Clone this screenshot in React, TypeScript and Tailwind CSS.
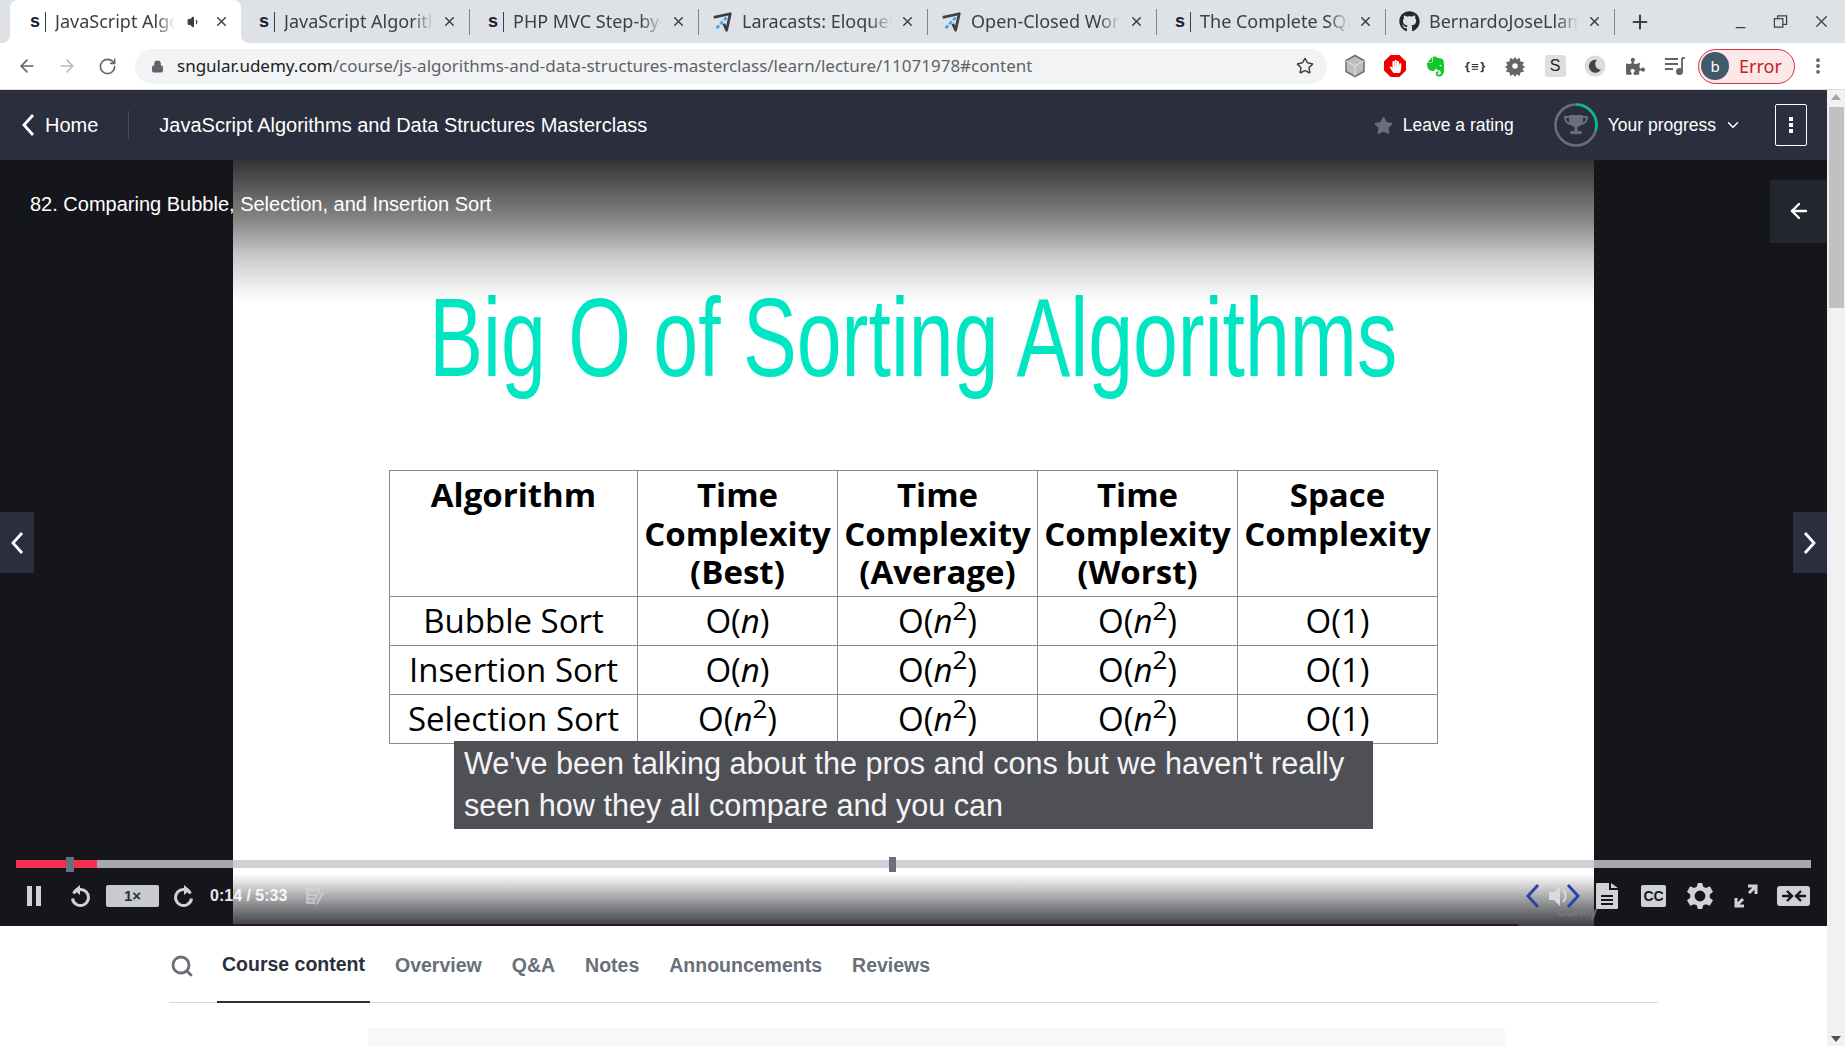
import {
  ArrowLeft,
  ArrowRight,
  ChevronDown,
  Lock,
  Minus,
  MoreVertical,
  Plus,
  RotateCw,
  Search,
  Star,
  Volume1,
  X,
} from "lucide-react";
import { FaGithub, FaPuzzlePiece, FaEvernote, FaHandPaper, FaStar } from "react-icons/fa";

const sans = "font-['Liberation_Sans',Arial,sans-serif]";
const chrome = "font-['Noto_Sans','Open_Sans',sans-serif]";

function Udemy() {
  return (
    <span className="flex h-5 w-4 shrink-0 items-center justify-between border-r border-[#3c4043] pr-[3px] font-['Liberation_Sans',sans-serif] text-[18px] font-bold text-[#1c1d33]">
      s
    </span>
  );
}

function Plane() {
  return (
    <svg viewBox="0 0 24 24" className="h-[22px] w-[22px] shrink-0" fill="none">
      <path d="M3 7 21 3l-4 18-3-7" stroke="#3c4043" strokeWidth="3" strokeLinejoin="round" />
      <path d="M17 7 5 20" stroke="#3ea6f2" strokeWidth="3" strokeDasharray="4 2" />
    </svg>
  );
}

function Chevron({ right }: { right?: boolean }) {
  return (
    <svg viewBox="0 0 14 22" className="h-[22px] w-[14px]" fill="none" stroke="white" strokeWidth="2.800">
      <path d={right ? "M2 1l9 10-9 10" : "M12 1 3 11l9 10"} />
    </svg>
  );
}

const tabs = [
  { icon: <Udemy />, title: "JavaScript Algorithms" },
  { icon: <Udemy />, title: "PHP MVC Step-by-Step" },
  { icon: <Plane />, title: "Laracasts: Eloquent" },
  { icon: <Plane />, title: "Open-Closed Works" },
  { icon: <Udemy />, title: "The Complete SQL" },
  { icon: <FaGithub className="h-[21px] w-[21px] shrink-0 text-[#24292e]" />, title: "BernardoJoseLlamas" },
];

function TabStrip() {
  return (
    <div className={`${chrome} flex h-[43px] items-stretch bg-[#dee1e6] pl-[10px] text-[18px] text-[#3c4043]`}>
      <div className="relative flex w-[231px] items-center rounded-t-lg bg-white pl-[20px]">
        <span className="absolute bottom-0 -left-2 h-2 w-2 bg-white">
          <span className="block h-2 w-2 rounded-br-lg bg-[#dee1e6]" />
        </span>
        <span className="absolute -right-2 bottom-0 h-2 w-2 bg-white">
          <span className="block h-2 w-2 rounded-bl-lg bg-[#dee1e6]" />
        </span>
        <Udemy />
        <span className="ml-[9px] w-[120px] overflow-hidden whitespace-nowrap [mask-image:linear-gradient(to_right,black_85%,transparent)]">
          JavaScript Algorithms
        </span>
        <Volume1 className="ml-[12px] h-[14px] w-[14px] fill-[#3c4043]" />
        <X className="ml-[13px] h-[15px] w-[15px]" strokeWidth={2.4} />
      </div>
      {tabs.map((tab) => (
        <div key={tab.title} className="relative flex w-[229px] items-center pl-[11px]">
          <span className="flex w-[23px] shrink-0 justify-end">{tab.icon}</span>
          <span className="ml-[9px] w-[150px] overflow-hidden whitespace-nowrap [mask-image:linear-gradient(to_right,black_85%,transparent)]">
            {tab.title}
          </span>
          <X className="ml-[8px] h-[15px] w-[15px]" strokeWidth={2.4} />
          <span className="absolute top-[9px] right-0 h-[26px] w-px bg-[#80868b]" />
        </div>
      ))}
      <Plus className="ml-[14px] h-[22px] w-[22px] self-center" strokeWidth={2.2} />
      <div className="ml-auto flex items-center pr-[14px]">
        <Minus className="mt-3 h-[15px] w-[15px]" />
        <svg viewBox="0 0 16 16" className="ml-[25px] h-[15px] w-[15px]" fill="none" stroke="#3c4043" strokeWidth="1.300">
          <rect x="1.500" y="5" width="9" height="9" />
          <path d="M5 5V2h9.500v9H10.500" />
        </svg>
        <X className="ml-[24px] h-[19px] w-[19px]" strokeWidth={1.5} />
      </div>
    </div>
  );
}

function Extensions() {
  return (
    <div className="flex items-center">
      <span className="flex w-10 justify-center">
        <svg viewBox="0 0 24 24" className="h-6 w-6">
          <path d="M12 1.500 21 6.500v11L12 22.500 3 17.500v-11z" fill="#bdbdbd" stroke="#6f6f6f" strokeWidth="1.500" strokeLinejoin="round" />
          <path d="M12 12v10M12 12 3 7M12 12l9-5" stroke="#e8e8e8" strokeWidth="1" />
        </svg>
      </span>
      <span className="flex w-10 justify-center">
        <span className="flex h-[22px] w-[22px] items-center justify-center bg-[#ee0000] [clip-path:polygon(30%_0,70%_0,100%_30%,100%_70%,70%_100%,30%_100%,0_70%,0_30%)]">
          <FaHandPaper className="h-[13px] w-[13px] text-white" />
        </span>
      </span>
      <span className="flex w-10 justify-center">
        <FaEvernote className="h-[23px] w-[23px] text-[#14c72a]" />
      </span>
      <span className="flex w-10 justify-center font-['DejaVu_Sans',sans-serif] text-[10px] font-bold text-[#333]">
        {"{≡}"}
      </span>
      <span className="flex w-10 justify-center">
        <svg viewBox="0 0 24 24" className="h-[22px] w-[22px]" fill="#666">
          <path d="M12 2l2 3 3-2 1 4 4 1-2 3 3 2-3 2 2 3-4 1-1 4-3-2-2 3-2-3-3 2-1-4-4-1 2-3-3-2 3-2-2-3 4-1 1-4 3 2z" />
          <circle cx="12" cy="12" r="3" fill="#fff" />
        </svg>
      </span>
      <span className="flex w-10 justify-center">
        <span className="flex h-[22px] w-[21px] items-center justify-center rounded-[3px] bg-[#dedede] font-['Liberation_Sans',sans-serif] text-[16px] text-[#222]">
          S
        </span>
      </span>
      <span className="flex w-10 justify-center">
        <svg viewBox="0 0 22 22" className="h-[22px] w-[22px]">
          <circle cx="11" cy="11" r="10.500" fill="#dcdcdc" />
          <path d="M13 5a6.500 6.500 0 1 0 4 9.500 5.500 5.500 0 0 1-4-9.500z" fill="#444" />
        </svg>
      </span>
      <span className="flex w-10 justify-center">
        <FaPuzzlePiece className="h-[19px] w-[19px] text-[#5f6368]" />
      </span>
      <span className="flex w-10 justify-center">
        <svg viewBox="0 0 22 22" className="h-[22px] w-[22px]" fill="none" stroke="#5f6368" strokeWidth="1.800">
          <path d="M1 4h13M1 9h13M1 14h8M18 3v13" />
          <circle cx="15.500" cy="16.500" r="2.600" fill="#5f6368" />
          <path d="M18 3h3" />
        </svg>
      </span>
    </div>
  );
}

function Toolbar() {
  return (
    <div className={`${chrome} flex h-[47px] shrink-0 items-center border-b border-[#dadce0] bg-white`}>
      <div className="flex w-[135px] items-center pl-[17px] text-[#5f6368]">
        <ArrowLeft className="h-5 w-5" />
        <ArrowRight className="ml-5 h-5 w-5 text-[#b8babd]" />
        <RotateCw className="ml-[21px] h-[19px] w-[19px]" />
      </div>
      <div className="flex h-[35px] w-[1192px] items-center rounded-full bg-[#f1f3f4] pr-[13px] pl-[16px]">
        <Lock className="h-[13px] w-[13px] fill-[#5f6368] text-[#5f6368]" />
        <span className="ml-[13px] text-[17px] whitespace-nowrap text-[#202124]">
          sngular.udemy.com
          <span className="text-[#5f6368]">/course/js-algorithms-and-data-structures-masterclass/learn/lecture/11071978#content</span>
        </span>
        <Star className="ml-auto h-[18px] w-[18px] text-[#3c4043]" />
      </div>
      <div className="ml-[8px]">
        <Extensions />
      </div>
      <div className="ml-[3px] flex h-[35px] w-[97px] items-center rounded-full border border-[#d9303e] bg-[#fce8e8] pl-[2px]">
        <span className="flex h-[28px] w-[28px] items-center justify-center rounded-full bg-[#40596b] text-[15px] text-white">b</span>
        <span className="ml-[10px] text-[18px] text-[#c5221f]">Error</span>
      </div>
      <MoreVertical className="ml-[13px] h-5 w-5 text-[#5f6368]" strokeWidth={2.6} />
    </div>
  );
}

function CourseHeader() {
  return (
    <div className={`${sans} flex h-[70px] shrink-0 items-center bg-[#2a2e3d] pr-5 text-white`}>
      <span className="ml-[21px] flex">
        <Chevron />
      </span>
      <span className="ml-[10px] text-[20px]">Home</span>
      <span className="ml-[30px] h-[28px] w-px bg-[#4a4e5c]" />
      <span className="ml-[30px] text-[20px]">JavaScript Algorithms and Data Structures Masterclass</span>
      <div className="ml-auto flex items-center">
        <FaStar className="h-[19px] w-[19px] text-[#686f7a]" />
        <span className="ml-[10px] text-[17.500px]">Leave a rating</span>
        <svg viewBox="0 0 44 44" className="ml-[40px] h-[44px] w-[44px]" fill="none">
          <circle cx="22" cy="22" r="20.500" stroke="#686f7a" strokeWidth="2.500" />
          <path d="M22 1.500A20.500 20.500 0 0 1 41.500 28" stroke="#00c08b" strokeWidth="2.500" />
          <path d="M15 12h14v5a7 7 0 0 1-5.500 7v4h4v3H16.500v-3h4v-4A7 7 0 0 1 15 17z" fill="#686f7a" />
          <path d="M15 14h-4c0 4 1.500 6 5 7M29 14h4c0 4-1.500 6-5 7" stroke="#686f7a" strokeWidth="2" />
        </svg>
        <span className="ml-[10px] text-[17.500px]">Your progress</span>
        <ChevronDown className="ml-[8px] h-[18px] w-[18px]" />
        <span className="ml-[33px] flex h-[42px] w-[32px] items-center justify-center rounded-[2px] border border-white">
          <svg viewBox="0 0 6 20" className="h-5 w-[6px]" fill="white">
            <rect x="1" y="2" width="4" height="4" />
            <rect x="1" y="8" width="4" height="4" />
            <rect x="1" y="14" width="4" height="4" />
          </svg>
        </span>
      </div>
    </div>
  );
}

function Big({ children }: { children: React.ReactNode }) {
  return <th className="border border-[#8a8a8a] px-0 pt-[5px] align-top text-[33px] leading-[38.500px] font-bold text-black">{children}</th>;
}

function Cell({ sup, one }: { sup?: boolean; one?: boolean }) {
  return (
    <td className="border border-[#8a8a8a] text-center text-[33px] leading-[48px] text-black">
      O(
      {one ? "1" : <em>n</em>}
      {sup && <sup className="text-[26px] leading-none">2</sup>})
    </td>
  );
}

const rows: { name: string; cells: ("n" | "n2" | "1")[] }[] = [
  { name: "Bubble Sort", cells: ["n", "n2", "n2", "1"] },
  { name: "Insertion Sort", cells: ["n", "n2", "n2", "1"] },
  { name: "Selection Sort", cells: ["n2", "n2", "n2", "1"] },
];

function Slide() {
  return (
    <div className="flex h-full w-[1361px] shrink-0 flex-col items-center bg-white">
      <h1 className="mt-[112px] h-[198px] origin-center scale-x-[0.72] font-['Liberation_Sans',sans-serif] text-[112px] leading-[132px] font-normal whitespace-nowrap text-[#00e6c3]">
        Big O of Sorting Algorithms
      </h1>
      <table className="w-[1048px] table-fixed border-collapse font-['Open_Sans',sans-serif]">
        <colgroup>
          <col className="w-[248px]" />
          <col className="w-[200px]" />
          <col className="w-[200px]" />
          <col className="w-[200px]" />
          <col className="w-[200px]" />
        </colgroup>
        <thead>
          <tr className="h-[126px]">
            <Big>Algorithm</Big>
            <Big>Time Complexity (Best)</Big>
            <Big>Time Complexity (Average)</Big>
            <Big>Time Complexity (Worst)</Big>
            <Big>Space Complexity</Big>
          </tr>
        </thead>
        <tbody>
          {rows.map((row) => (
            <tr key={row.name} className="h-[49px]">
              <td className="border border-[#8a8a8a] text-center text-[33px] leading-[48px] whitespace-nowrap text-black">{row.name}</td>
              {row.cells.map((c, i) => (
                <Cell key={i} sup={c === "n2"} one={c === "1"} />
              ))}
            </tr>
          ))}
        </tbody>
      </table>
    </div>
  );
}

function PlayerControls() {
  return (
    <div className={`${sans} absolute right-0 bottom-0 left-0 flex h-[60px] items-center justify-between pr-[17px] pl-[27px] text-[#d1d2d5]`}>
      <div className="flex items-center">
        <svg viewBox="0 0 14 20" className="h-5 w-[14px]" fill="currentColor">
          <rect width="5" height="20" />
          <rect x="9" width="5" height="20" />
        </svg>
        <svg viewBox="0 0 24 24" className="ml-[26px] h-6 w-6" fill="none" stroke="currentColor" strokeWidth="3">
          <path d="M6.500 9.500a8 8 0 1 1-1 5" />
          <path d="M13 1 7 6l6 5z" fill="currentColor" stroke="none" />
        </svg>
        <span className="ml-[15px] flex h-[22px] w-[53px] items-center justify-center rounded-[2px] bg-[#c9cacd] text-[15px] font-bold text-[#2a2e3d]">1×</span>
        <svg viewBox="0 0 24 24" className="ml-[14px] h-6 w-6" fill="none" stroke="currentColor" strokeWidth="3">
          <path d="M17.500 9.500a8 8 0 1 0 1 5" />
          <path d="M11 1l6 5-6 5z" fill="currentColor" stroke="none" />
        </svg>
        <span className="ml-[13px] text-[16px] font-bold text-white/90">0:14 / 5:33</span>
        <svg viewBox="0 0 20 20" className="ml-[18px] h-[20px] w-[20px]" fill="currentColor" opacity="0.7">
          <path d="M1 2h14v5l-5 8v3H1zM4 6v1.500h8V6zm0 4v1.500h6V10zm0 4v1.500h4V14z" fillRule="evenodd" />
          <path d="M17 6l2 1-6 11-2 1 0-2z" />
        </svg>
      </div>
      <div className="flex items-center">
        <svg viewBox="0 0 56 26" className="mr-[15px] h-[26px] w-[56px]" fill="none">
          <path d="M13 2 3 13l10 11M43 2l10 11-10 11" stroke="#2a45a8" strokeWidth="3" />
          <path d="M24 9h5l6-6v20l-6-6h-5z" fill="#d9dadc" />
          <path d="M38 7a8 8 0 0 1 0 12" stroke="#d9dadc" strokeWidth="2" />
        </svg>
        <svg viewBox="0 0 22 26" className="h-[26px] w-[22px]" fill="currentColor">
          <path d="M0 1a1 1 0 0 1 1-1h12v7h9v18a1 1 0 0 1-1 1H1a1 1 0 0 1-1-1zM5 12v2h12v-2zm0 4v2h12v-2zm0 4v2h12v-2z" fillRule="evenodd" />
          <path d="M15 0l7 5h-7z" />
        </svg>
        <span className="ml-[23px] flex h-[22px] w-[25px] items-center justify-center rounded-[2px] bg-[#d1d2d5] text-[14px] leading-none font-bold text-[#16171b]">CC</span>
        <svg viewBox="0 0 24 24" className="ml-[21px] h-[26px] w-[26px]" fill="currentColor">
          <path fillRule="evenodd" d="M10 0h4l1 3.500 2.500 1L21 3l3 5-3 2.500v3L24 16l-3 5-3.500-1.500-2.500 1L14 24h-4l-1-3.500-2.500-1L3 21l-3-5 3-2.500v-3L0 8l3-5 3.500 1.500 2.500-1zm2 7a5 5 0 1 0 0 10 5 5 0 0 0 0-10z" />
        </svg>
        <svg viewBox="0 0 26 26" className="ml-[20px] h-[26px] w-[26px]" fill="none" stroke="currentColor" strokeWidth="3">
          <path d="M4 22 10 16M16 10l6-6M15 3h8v8M3 15v8h8" />
        </svg>
        <span className="ml-[18px] flex h-[20px] w-[33px] items-center justify-center rounded-[3px] bg-[#d1d2d5]">
          <svg viewBox="0 0 28 14" className="h-[14px] w-[28px]" fill="none" stroke="#16171b" strokeWidth="2.400">
            <path d="M2 7h9M7 2l5 5-5 5M26 7h-9M21 2l-5 5 5 5" />
          </svg>
        </span>
      </div>
    </div>
  );
}

function Video() {
  return (
    <div className="relative flex h-[766px] shrink-0 bg-[#15161b]">
      <div className="w-[233px] shrink-0" />
      <Slide />

      {/* fades over the slide */}
      <div className="absolute top-0 right-[233px] left-[233px] h-[145px] bg-[linear-gradient(to_bottom,rgba(0,0,0,0.8)_0%,rgba(0,0,0,0.46)_43%,rgba(0,0,0,0.215)_66%,rgba(0,0,0,0.06)_88%,rgba(0,0,0,0)_100%)]" />
      <div className="absolute right-[233px] bottom-0 left-[233px] h-[52px] bg-gradient-to-b from-transparent to-[#3d3e43]" />
      <div className="absolute bottom-0 left-[233px] h-[2px] w-[1285px] bg-[#2b1720]" />

      <p className={`${sans} absolute top-[29px] left-[30px] text-[20px] text-white`}>82. Comparing Bubble, Selection, and Insertion Sort</p>

      <div className="absolute top-[20px] right-0 flex h-[63px] w-[57px] items-center justify-center bg-[#23262f] pb-[2px] text-white">
        <ArrowLeft className="h-6 w-6" strokeWidth={2.4} />
      </div>
      <div className="absolute top-[352px] left-0 flex h-[61px] w-[34px] items-center justify-center bg-[#2a2e3d]">
        <Chevron />
      </div>
      <div className="absolute top-[352px] right-0 flex h-[61px] w-[34px] items-center justify-center bg-[#2a2e3d]">
        <Chevron right />
      </div>

      <div className={`${sans} absolute top-[581px] left-[454px] h-[88px] w-[919px] bg-[#4f5055] px-[10px] pt-[1px] text-[30.600px] leading-[42px] text-[#f4f4f5]`}>
        We've been talking about the pros and cons but we haven't really
        <br />
        seen how they all compare and you can
      </div>

      <div className="absolute top-[700px] right-[16px] left-[16px] h-2 bg-[#c5c6ca]/[.83]">
        <div className="h-2 w-[81px] bg-[#f5304f]" />
        <span className="absolute -top-[3px] left-[50px] h-[15px] w-2 bg-[#686f7a]" />
        <span className="absolute -top-[3px] left-[873px] h-[15px] w-[7px] bg-[#686f7a]" />
      </div>

      <PlayerControls />
      <span className={`${sans} absolute top-[745px] left-[1557px] text-[12px] leading-[14px] font-bold text-[#77787c]`}>Udemy</span>
    </div>
  );
}

function CourseTabs() {
  const items = ["Overview", "Q&A", "Notes", "Announcements", "Reviews"];
  return (
    <div className={`${sans} bg-white`}>
      <div className="mx-[169px] flex h-[77px] items-stretch border-b border-[#dcdacb] text-[19.500px] font-bold text-[#686f7a]">
        <span className="ml-[1px] flex items-center pt-[3px]">
          <Search className="h-6 w-6" strokeWidth={2.8} />
        </span>
        <span className="-mb-px ml-[23px] flex items-center border-b-2 border-[#29303b] px-[5px] pt-[3px] text-[#29303b]">Course content</span>
        <div className="ml-[25px] flex items-center gap-[30px] pt-[3px]">
          {items.map((t) => (
            <span key={t}>{t}</span>
          ))}
        </div>
      </div>
      <div className="mx-[368px] mt-[25px] h-[30px] w-[1137px] bg-[#f7f8fa]" />
    </div>
  );
}

function Scrollbar() {
  return (
    <div className="flex w-[18px] shrink-0 flex-col items-center bg-[#f1f1f1] pt-[4px]">
      <span className="h-0 w-0 border-x-[5px] border-b-[6px] border-x-transparent border-b-[#a3a3a3]" />
      <span className="mt-[7px] h-[201px] w-[15px] bg-[#c1c1c1]" />
      <span className="mt-auto mb-[4px] h-0 w-0 border-x-[5px] border-t-[6px] border-x-transparent border-t-[#505050]" />
    </div>
  );
}

export default function App() {
  return (
    <div className="flex h-[1046px] w-full flex-col overflow-hidden bg-white">
      <TabStrip />
      <Toolbar />
      <div className="flex min-h-0 flex-1">
        <div className="min-w-0 flex-1 overflow-hidden">
          <CourseHeader />
          <Video />
          <CourseTabs />
        </div>
        <Scrollbar />
      </div>
    </div>
  );
}
